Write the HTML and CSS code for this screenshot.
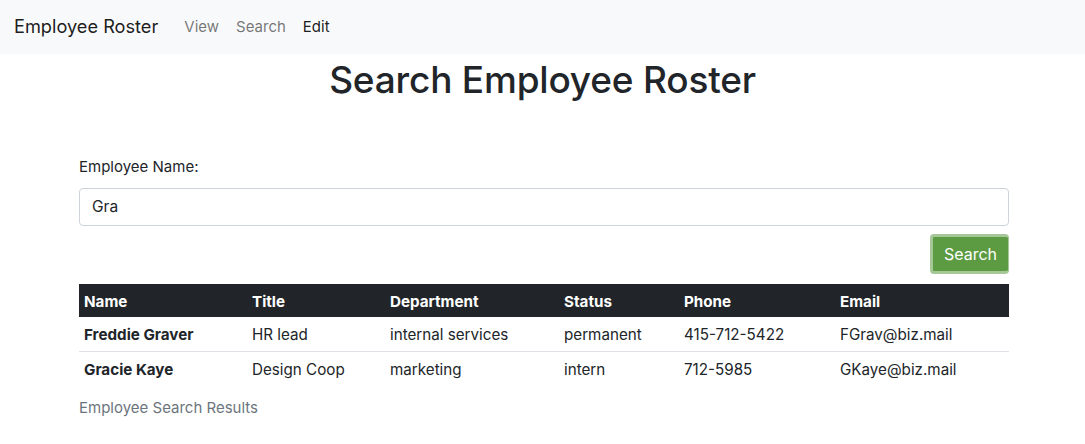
FILE: index.html
```html
<!DOCTYPE html>
<html lang="en">
<head>
<meta charset="utf-8">
<title>Employee Roster</title>
<link rel="stylesheet" href="styles.css">
</head>
<body>
<nav class="navbar">
  <span class="brand">Employee Roster</span>
  <a class="nav-link" href="#">View</a>
  <a class="nav-link" href="#">Search</a>
  <a class="nav-link active" href="#">Edit</a>
</nav>
<h1 class="title">Search Employee Roster</h1>
<main class="container">
  <form class="search-form">
    <label class="label" for="name">Employee Name:</label>
    <input class="input" id="name" type="text" value="Gra">
    <div class="actions">
      <button class="btn" type="button">Search</button>
    </div>
  </form>
  <table class="table">
    <caption class="caption">Employee Search Results</caption>
    <thead>
      <tr>
        <th class="c-name">Name</th>
        <th class="c-title">Title</th>
        <th class="c-dept">Department</th>
        <th class="c-status">Status</th>
        <th class="c-phone">Phone</th>
        <th class="c-email">Email</th>
      </tr>
    </thead>
    <tbody>
      <tr>
        <th>Freddie Graver</th>
        <td>HR lead</td>
        <td>internal services</td>
        <td>permanent</td>
        <td>415-712-5422</td>
        <td>FGrav@biz.mail</td>
      </tr>
      <tr>
        <th>Gracie Kaye</th>
        <td>Design Coop</td>
        <td>marketing</td>
        <td>intern</td>
        <td>712-5985</td>
        <td>GKaye@biz.mail</td>
      </tr>
    </tbody>
  </table>
</main>
</body>
</html>
```

FILE: styles.css
```css
* { box-sizing: border-box; }
body {
  margin: 0;
  font-family: Inter, "Noto Sans", "Liberation Sans", sans-serif;
  font-size: 16px;
  line-height: 1.5;
  color: #212529;
  background: #fff;
}
.navbar {
  display: flex;
  align-items: center;
  height: 54px;
  padding: 0 14px;
  background: #f8f9fa;
}
.brand {
  font-size: 18.2px;
  margin-right: 26px;
  color: rgba(0,0,0,.9);
}
.nav-link {
  color: rgba(0,0,0,.55);
  text-decoration: none;
  font-size: 15px;
  margin-right: 17px;
}
.nav-link.active { color: rgba(0,0,0,.9); }
.title {
  margin: 0;
  text-align: center;
  font-size: 37px;
  font-weight: 500;
  line-height: 52px;
  letter-spacing: -0.2px;
}
.container {
  width: 930px;
  margin: 0 0 0 79px;
  padding-top: 50px;
}
.search-form { display: flex; flex-direction: column; }
.label { margin-bottom: 9px; font-size: 15px; }
.input {
  height: 38px;
  padding: 6px 12px;
  border: 1px solid #ced4da;
  border-radius: 4px;
  font: inherit;
  font-size: 15.5px;
  color: #212529;
}
.actions { display: flex; justify-content: flex-end; margin-top: 8px; }
.btn {
  width: 79px;
  height: 40px;
  background: #5c9b41;
  color: #fff;
  border: 3px solid #a6c797;
  border-right-width: 1px;
  border-radius: 4px;
  font: inherit;
  font-size: 16px;
  padding: 0;
}
.table {
  width: 100%;
  margin-top: 10px;
  border-collapse: collapse;
  caption-side: bottom;
}
.table th, .table td {
  padding: 7px 5px 4px;
  text-align: left;
  vertical-align: top;
  font-size: 15.2px;
}
.table thead th {
  background: #212529;
  color: #fff;
  font-weight: 700;
}
.table tbody th { font-weight: 700; }
.table tbody tr:first-child th, .table tbody tr:first-child td {
  border-bottom: 1px solid #dee2e6;
}
.c-name { width: 168px; }
.c-title { width: 138px; }
.c-dept { width: 174px; }
.c-status { width: 120px; }
.c-phone { width: 156px; }
.c-email { width: 174px; }
.caption {
  text-align: left;
  color: #6c757d;
  padding-top: 11px;
  font-size: 15px;
}
```
